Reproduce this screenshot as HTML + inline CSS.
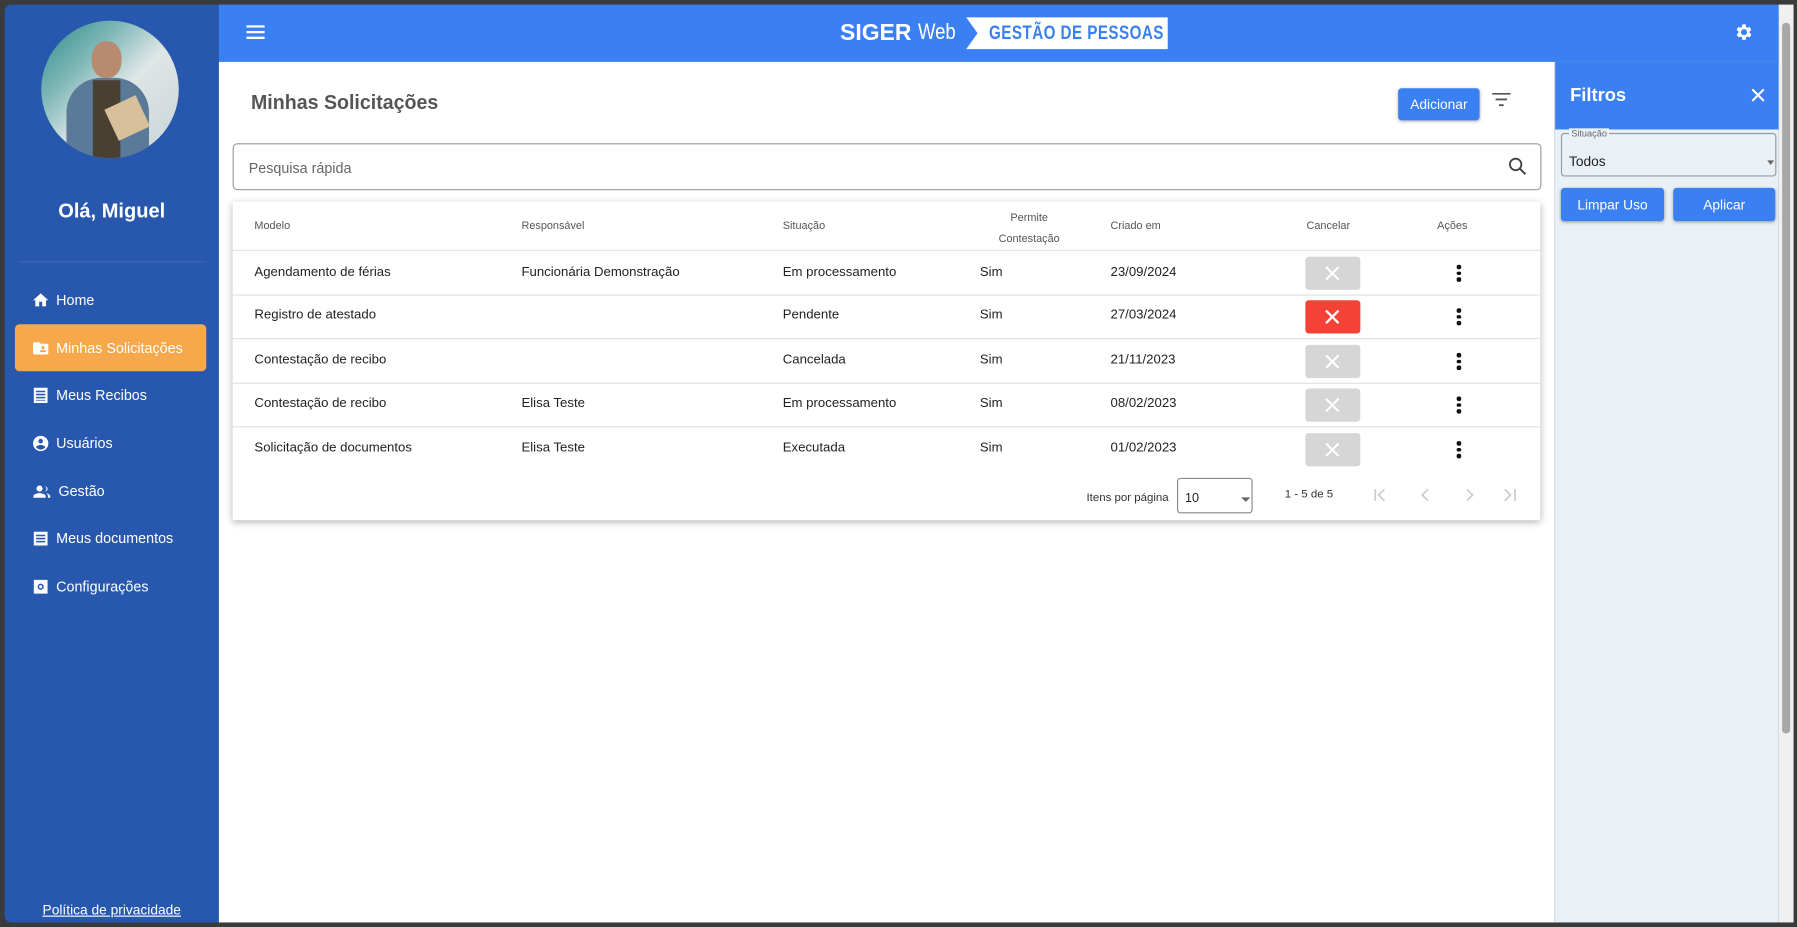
<!DOCTYPE html>
<html><head><meta charset="utf-8">
<style>
*{box-sizing:border-box;margin:0;padding:0}
html,body{width:1797px;height:927px;overflow:hidden;background:#3a3a3a;font-family:"Liberation Sans",sans-serif}
#w{position:absolute;left:0;top:0;width:1568px;height:809px;transform:scale(1.14605,1.1459);transform-origin:0 0;background:#3a3a3a}
.abs{position:absolute}
#side{left:4px;top:4px;width:187px;height:801px;background:#2858ae;border-radius:6px 0 0 6px}
.nav{position:absolute;left:9px;width:167px;height:41px;color:#fff;font-size:12.5px;display:flex;align-items:center;padding-left:14px}
.nav svg{margin-right:5px}
.nav.act{background:#f6a84a;border-radius:4px}
#top{left:191px;top:4px;width:1361px;height:50px;background:#3a80f2}
#main{left:191px;top:54px;width:1165px;height:751px;background:#fff}
#fp{left:1356px;top:54px;width:196px;height:751px;background:#eaf1f6;border-left:1px solid #d8dde2}
.btn{position:absolute;background:#3a80f2;color:#fff;font-size:12px;border-radius:3px;display:flex;align-items:center;justify-content:center;box-shadow:0 1px 3px rgba(0,0,0,.3)}
.th{position:absolute;font-size:9.5px;color:#555}
.td{position:absolute;font-size:11.5px;color:#222}
.row{position:absolute;left:0;width:1141px;height:1px;background:#e0e0e0}
.cx{position:absolute;left:936px;width:48px;height:29px;background:#d6d6d6;border-radius:3px}
.cx svg{position:absolute;left:17px;top:8px}
.dots{position:absolute;left:1068px;width:4px}
.dots i{display:block;width:3.5px;height:3.5px;background:#111;border-radius:50%;margin-bottom:2px}
</style></head><body><div id="w">
<div class="abs" id="side">
 <div class="abs" style="left:32px;top:14px;width:120px;height:120px;border-radius:50%;overflow:hidden;background:linear-gradient(135deg,#2a8a8a 0%,#7fb8b8 30%,#dfe6e6 55%,#c8d2d6 100%)">
  <div class="abs" style="left:44px;top:18px;width:26px;height:32px;border-radius:45%;background:#b88a70"></div>
  <div class="abs" style="left:22px;top:50px;width:72px;height:80px;border-radius:30px 30px 0 0;background:#5a7a98"></div>
  <div class="abs" style="left:45px;top:52px;width:24px;height:70px;background:#4a4032"></div>
  <div class="abs" style="left:60px;top:70px;width:30px;height:30px;background:#d8c09a;transform:rotate(-25deg)"></div>
 </div>
 <div class="abs" style="left:0;width:187px;top:170px;text-align:center;color:#fff;font-weight:bold;font-size:17.5px">Olá, Miguel</div>
 <div class="abs" style="left:12px;top:224px;width:164px;height:1px;background:#3b69b8"></div>
 <div class="nav" style="top:237px"><svg width="17" height="16" viewBox="0 0 24 24"><path fill="#fff" d="M10 20v-6h4v6h5v-8h3L12 3 2 12h3v8z"/></svg>Home</div>
 <div class="nav act" style="top:279px"><svg width="17" height="16" viewBox="0 0 24 24"><path fill="#fff" d="M20 6h-8l-2-2H4c-1.1 0-2 .9-2 2v12c0 1.1.9 2 2 2h16c1.1 0 2-.9 2-2V8c0-1.1-.9-2-2-2zm-5 3a2 2 0 110 4 2 2 0 010-4zm4 8h-8v-1c0-1.3 2.7-2 4-2s4 .7 4 2v1z"/></svg>Minhas Solicitações</div>
 <div class="nav" style="top:320px"><svg width="17" height="16" viewBox="0 0 24 24"><path fill="#fff" d="M3 2h18v20H3zM6 6h12v2H6zm0 4h12v2H6zm0 4h12v2H6zm0 4h12v1H6z" fill-rule="evenodd"/></svg>Meus Recibos</div>
 <div class="nav" style="top:362px"><svg width="17" height="16" viewBox="0 0 24 24"><path fill="#fff" d="M12 2a10 10 0 100 20 10 10 0 000-20zm0 4a3 3 0 110 6 3 3 0 010-6zm0 14a8 8 0 01-6-3c0-2 4-3 6-3s6 1 6 3a8 8 0 01-6 3z"/></svg>Usuários</div>
 <div class="nav" style="top:404px"><svg width="19" height="16" viewBox="0 0 24 24"><path fill="#fff" d="M9 12a4 4 0 100-8 4 4 0 000 8zm0 2c-3 0-8 1.5-8 4v2h16v-2c0-2.5-5-4-8-4zm7-2a3.5 3.5 0 000-7 4 4 0 010 7zm1.5 2c1.5 1 2.5 2.3 2.5 4v2h3v-2c0-2.3-3.5-3.7-5.5-4z"/></svg>Gestão</div>
 <div class="nav" style="top:445px"><svg width="17" height="16" viewBox="0 0 24 24"><path fill="#fff" fill-rule="evenodd" d="M3 3h18v18H3zM6 7h12v2H6zm0 4h12v2H6zm0 4h12v2H6z"/></svg>Meus documentos</div>
 <div class="nav" style="top:487px"><svg width="17" height="16" viewBox="0 0 24 24"><path fill="#fff" fill-rule="evenodd" d="M3 3h18v18H3zm9 5a4 4 0 100 8 4 4 0 000-8zm0 2a2 2 0 110 4 2 2 0 010-4z"/></svg>Configurações</div>
 <div class="abs" style="left:0;width:187px;top:783px;text-align:center;color:#fff;font-size:12px;text-decoration:underline">Política de privacidade</div>
</div>
<div class="abs" id="top">
 <div class="abs" style="left:542px;top:14px;color:#fff;font-weight:bold;font-size:20px">SIGER</div>
 <div class="abs" style="left:610px;top:14px;color:#fff;font-size:19px;transform:scaleX(.85);transform-origin:0 0">Web</div>
 <svg class="abs" style="left:24px;top:18px" width="16" height="12" viewBox="0 0 16 12"><path fill="#fff" d="M0 0h16v2H0zm0 5h16v2H0zm0 5h16v2H0z"/></svg>
 <svg class="abs" style="left:652px;top:11px" width="176" height="28"><polygon points="0,0 176,0 176,28 0,28 10,14" fill="#fff"/></svg>
 <div class="abs" style="left:672px;top:15px;color:#3a80f2;font-weight:bold;font-size:17px;transform:scaleX(.78);transform-origin:0 0;white-space:nowrap;letter-spacing:.5px">GESTÃO DE PESSOAS</div>
 <svg class="abs" style="left:1321px;top:15px" width="18" height="18" viewBox="0 0 24 24"><path fill="#fff" d="M19.4 13a7.5 7.5 0 000-2l2.1-1.6-2-3.5-2.5 1a7 7 0 00-1.7-1L15 3h-4l-.4 2.9a7 7 0 00-1.7 1l-2.5-1-2 3.5L6.6 11a7.5 7.5 0 000 2l-2.1 1.6 2 3.5 2.5-1a7 7 0 001.7 1L11 21h4l.4-2.9a7 7 0 001.7-1l2.5 1 2-3.5zM13 15.5a3.5 3.5 0 110-7 3.5 3.5 0 010 7z"/></svg>
</div>
<div class="abs" id="main">
 <div class="abs" style="left:28px;top:25px;font-size:18px;font-weight:bold;color:#555;transform:scaleX(.95);transform-origin:0 0">Minhas Solicitações</div>
 <div class="btn" style="left:1029px;top:23px;width:71px;height:28px">Adicionar</div>
 <svg class="abs" style="left:1111px;top:27px" width="16" height="12"><path fill="#555" d="M0 0h16v1.6H0zm3 5h10v1.6H3zm3 5h4v1.6H6z"/></svg>
 <div class="abs" style="left:12px;top:71px;width:1142px;height:41px;border:1px solid #999;border-radius:4px"></div>
 <div class="abs" style="left:26px;top:86px;font-size:12.5px;color:#666">Pesquisa rápida</div>
 <svg class="abs" style="left:1125px;top:83px" width="16" height="16" viewBox="0 0 16 16"><circle cx="6.5" cy="6.5" r="5" fill="none" stroke="#444" stroke-width="1.6"/><path d="M10 10l5 5" stroke="#444" stroke-width="1.8"/></svg>
 <div class="abs" style="left:12px;top:122px;width:1141px;height:278px;background:#fff;box-shadow:0 2px 6px rgba(0,0,0,.3)">
  <div class="th" style="left:19px;top:16px">Modelo</div>
  <div class="th" style="left:252px;top:16px">Responsável</div>
  <div class="th" style="left:480px;top:16px">Situação</div>
  <div class="th" style="left:640px;top:6px;width:110px;text-align:center;line-height:18px">Permite<br>Contestação</div>
  <div class="th" style="left:766px;top:16px">Criado em</div>
  <div class="th" style="left:937px;top:16px">Cancelar</div>
  <div class="th" style="left:1051px;top:16px">Ações</div>
  <div class="row" style="top:42px"></div><div class="row" style="top:81px"></div><div class="row" style="top:119px"></div><div class="row" style="top:158px"></div><div class="row" style="top:196px"></div>
  <div class="td" style="left:19px;top:56px">Agendamento de férias</div><div class="td" style="left:252px;top:56px">Funcionária Demonstração</div><div class="td" style="left:480px;top:56px">Em processamento</div><div class="td" style="left:652px;top:56px">Sim</div><div class="td" style="left:766px;top:56px">23/09/2024</div>
  <div class="td" style="left:19px;top:93px">Registro de atestado</div><div class="td" style="left:480px;top:93px">Pendente</div><div class="td" style="left:652px;top:93px">Sim</div><div class="td" style="left:766px;top:93px">27/03/2024</div>
  <div class="td" style="left:19px;top:132px">Contestação de recibo</div><div class="td" style="left:480px;top:132px">Cancelada</div><div class="td" style="left:652px;top:132px">Sim</div><div class="td" style="left:766px;top:132px">21/11/2023</div>
  <div class="td" style="left:19px;top:170px">Contestação de recibo</div><div class="td" style="left:252px;top:170px">Elisa Teste</div><div class="td" style="left:480px;top:170px">Em processamento</div><div class="td" style="left:652px;top:170px">Sim</div><div class="td" style="left:766px;top:170px">08/02/2023</div>
  <div class="td" style="left:19px;top:209px">Solicitação de documentos</div><div class="td" style="left:252px;top:209px">Elisa Teste</div><div class="td" style="left:480px;top:209px">Executada</div><div class="td" style="left:652px;top:209px">Sim</div><div class="td" style="left:766px;top:209px">01/02/2023</div>
  <div class="cx" style="top:48px"><svg width="13" height="13"><path d="M1 1l11 11M12 1L1 12" stroke="#fff" stroke-width="1.8"/></svg></div>
  <div class="cx" style="top:86px;background:#f44336"><svg width="13" height="13"><path d="M1 1l11 11M12 1L1 12" stroke="#fff" stroke-width="2"/></svg></div>
  <div class="cx" style="top:125px"><svg width="13" height="13"><path d="M1 1l11 11M12 1L1 12" stroke="#fff" stroke-width="1.8"/></svg></div>
  <div class="cx" style="top:163px"><svg width="13" height="13"><path d="M1 1l11 11M12 1L1 12" stroke="#fff" stroke-width="1.8"/></svg></div>
  <div class="cx" style="top:202px"><svg width="13" height="13"><path d="M1 1l11 11M12 1L1 12" stroke="#fff" stroke-width="1.8"/></svg></div>
  <div class="dots" style="top:55px"><i></i><i></i><i></i></div>
  <div class="dots" style="top:93px"><i></i><i></i><i></i></div>
  <div class="dots" style="top:132px"><i></i><i></i><i></i></div>
  <div class="dots" style="top:170px"><i></i><i></i><i></i></div>
  <div class="dots" style="top:209px"><i></i><i></i><i></i></div>
  <div class="abs" style="left:745px;top:253px;font-size:10px;color:#333">Itens por página</div>
  <div class="abs" style="left:824px;top:241px;width:66px;height:31px;border:1px solid #888;border-radius:3px;font-size:11px;color:#222;padding:11px 0 0 6px">10</div>
  <div class="abs" style="left:880px;top:258px;width:0;height:0;border-left:4px solid transparent;border-right:4px solid transparent;border-top:4px solid #666"></div>
  <div class="abs" style="left:918px;top:250px;font-size:10px;color:#333">1 - 5 de 5</div>
  <svg class="abs" style="left:995px;top:250px" width="130" height="12"><g stroke="#ccc" stroke-width="1.5" fill="none"><path d="M2 1v10M10 1L5 6l5 5M48 1l-5 5 5 5M82 1l5 5-5 5M115 1l5 5-5 5M124 1v10"/></g></svg>
 </div>
</div>
<div class="abs" id="fp">
 <div class="abs" style="left:0;top:0;width:196px;height:59px;background:#3a80f2"></div>
 <div class="abs" style="left:13px;top:21px;color:#fff;font-weight:bold;font-size:16px">Filtros</div>
 <svg class="abs" style="left:171px;top:23px" width="12" height="12"><path d="M1 1l10 10M11 1L1 11" stroke="#fff" stroke-width="1.8"/></svg>
 <div class="abs" style="left:5px;top:62px;width:188px;height:38px;border:1px solid #999;border-radius:3px"></div>
 <div class="abs" style="left:12px;top:58px;font-size:8px;color:#666;background:#eaf1f6;padding:0 2px">Situação</div>
 <div class="abs" style="left:12px;top:80px;font-size:12px;color:#222">Todos</div>
 <div class="abs" style="left:185px;top:86px;border-left:3px solid transparent;border-right:3px solid transparent;border-top:4px solid #666"></div>
 <div class="btn" style="left:5px;top:110px;width:90px;height:29px">Limpar Uso</div>
 <div class="btn" style="left:103px;top:110px;width:89px;height:29px">Aplicar</div>
</div>
<div class="abs" style="left:1552px;top:4px;width:13px;height:801px;background:#f0f0f0"></div>
<div class="abs" style="left:1555px;top:20px;width:7px;height:620px;background:#a8a8a8;border-radius:3px"></div>
</div></body></html>
